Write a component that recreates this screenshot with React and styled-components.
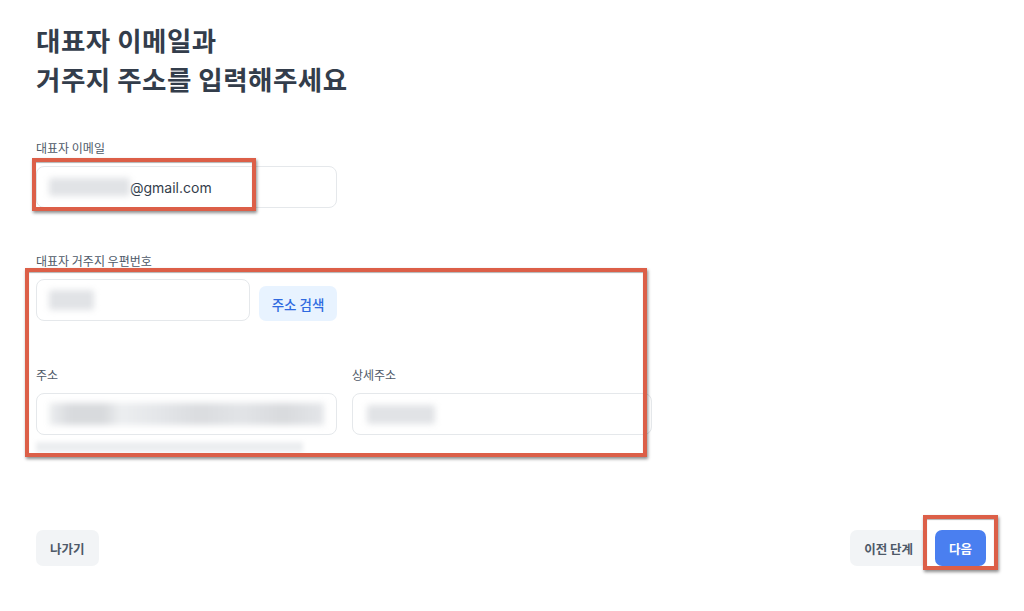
import React from "react";
import styled, { createGlobalStyle } from "styled-components";

const GlobalStyle = createGlobalStyle`
  html, body {
    margin: 0;
    padding: 0;
    background: #ffffff;
  }
  * {
    box-sizing: border-box;
  }
  body {
    font-family: Inter, "Noto Sans CJK KR", "Noto Sans", sans-serif;
    color: #333d4b;
  }
`;

const Page = styled.div`
  position: relative;
  display: flex;
  flex-direction: column;
  height: 100vh;
  padding: 20px 38px 45px 36px;
`;

const Title = styled.h1`
  margin: 0;
  font-family: "Noto Sans CJK KR", sans-serif;
  font-size: 26.5px;
  line-height: 39px;
  letter-spacing: 0.5px;
  font-weight: 700;
  color: #333d4b;
`;

const Section = styled.div`
  margin-top: ${(p) => p.$top}px;
`;

const Label = styled.div`
  font-family: "Noto Sans CJK KR", sans-serif;
  font-size: 12px;
  line-height: 18px;
  color: #4e5968;
  margin-bottom: 9px;
`;

const Field = styled.div`
  display: flex;
  align-items: center;
  width: ${(p) => p.$width}px;
  height: 42px;
  padding: 0 12px;
  border: 1px solid #e5e8eb;
  border-radius: 8px;
  background: #fff;
  font-size: 14px;
  color: #333d4b;
`;

const Blur = styled.span`
  display: inline-block;
  width: ${(p) => p.$w}px;
  height: ${(p) => p.$h}px;
  margin-left: ${(p) => p.$ml || 0}px;
  background: ${(p) => p.$bg || "#e1e3e6"};
  filter: blur(3px);
  border-radius: 2px;
`;

const Relative = styled.div`
  position: relative;
  display: ${(p) => (p.$inline ? "inline-block" : "block")};
`;

const Highlight = styled.div`
  position: absolute;
  left: ${(p) => p.$l}px;
  top: ${(p) => p.$t}px;
  width: ${(p) => p.$w}px;
  height: ${(p) => p.$h}px;
  border: 4px solid #dc5f48;
  box-shadow: 1px 2px 3px rgba(0, 0, 0, 0.45),
    inset 0 1px 1px rgba(0, 0, 0, 0.3);
  pointer-events: none;
`;

const Row = styled.div`
  display: flex;
  align-items: flex-end;
  gap: ${(p) => p.$gap}px;
`;

const Column = styled.div`
  display: flex;
  flex-direction: column;
`;

const SearchButton = styled.button`
  width: 78px;
  height: 35px;
  padding: 0;
  border: none;
  border-radius: 7px;
  background: #e8f3ff;
  color: #2f6ae0;
  font-family: "Noto Sans CJK KR", sans-serif;
  font-size: 13.5px;
  font-weight: 500;
`;

const Helper = styled.div`
  margin-top: 7px;
  width: 267px;
  height: 10px;
  background: #eceef0;
  filter: blur(2px);
`;

const Footer = styled.div`
  margin-top: auto;
  display: flex;
  justify-content: space-between;
  align-items: center;
`;

const ButtonGroup = styled.div`
  display: flex;
  gap: 8px;
`;

const Button = styled.button`
  height: 36px;
  padding: 0 14px;
  border: none;
  border-radius: 7px;
  font-family: "Noto Sans CJK KR", sans-serif;
  font-size: 12.5px;
  font-weight: 600;
  background: ${(p) => (p.$primary ? "#4a7ff0" : "#f2f4f6")};
  color: ${(p) => (p.$primary ? "#ffffff" : "#4e5968")};
`;

const AddressBlur = styled.span`
  display: inline-block;
  width: 278px;
  height: 22px;
  background: linear-gradient(
    90deg,
    #eceef0 0%,
    #d8dadd 8%,
    #d8dadd 20%,
    #eceef0 26%,
    #e4e6e9 40%,
    #dadcdf 55%,
    #e2e4e7 70%,
    #d8dadd 85%,
    #e4e6e9 100%
  );
  filter: blur(3px);
`;

export default function App() {
  return (
    <>
      <GlobalStyle />
      <Page>
        <Title>
          대표자 이메일과
          <br />
          거주지 주소를 입력해주세요
        </Title>

        <Section $top={41}>
          <Label>대표자 이메일</Label>
          <Relative>
            <Field $width={301}>
              <Blur $w={81} $h={18} />
              @gmail.com
            </Field>
            <Highlight $l={-4} $t={-8} $w={224} $h={53} />
          </Relative>
        </Section>

        <Section $top={44}>
          <Label>대표자 거주지 우편번호</Label>
          <Relative>
            <Row $gap={9}>
              <Field $width={214}>
                <Blur $w={45} $h={20} />
              </Field>
              <SearchButton>주소 검색</SearchButton>
            </Row>

            <Section $top={45}>
              <Row $gap={15}>
                <Column>
                  <Label>주소</Label>
                  <Field $width={301}>
                    <AddressBlur />
                  </Field>
                </Column>
                <Column>
                  <Label>상세주소</Label>
                  <Field $width={300}>
                    <Blur $w={68} $h={19} $ml={2} />
                  </Field>
                </Column>
              </Row>
              <Helper />
            </Section>
            <Highlight $l={-11} $t={-11} $w={622} $h={189} />
          </Relative>
        </Section>

        <Footer>
          <Button>나가기</Button>
          <ButtonGroup>
            <Button>이전 단계</Button>
            <Relative $inline>
              <Button $primary>다음</Button>
              <Highlight $l={-12} $t={-15} $w={75} $h={55} />
            </Relative>
          </ButtonGroup>
        </Footer>
      </Page>
    </>
  );
}
